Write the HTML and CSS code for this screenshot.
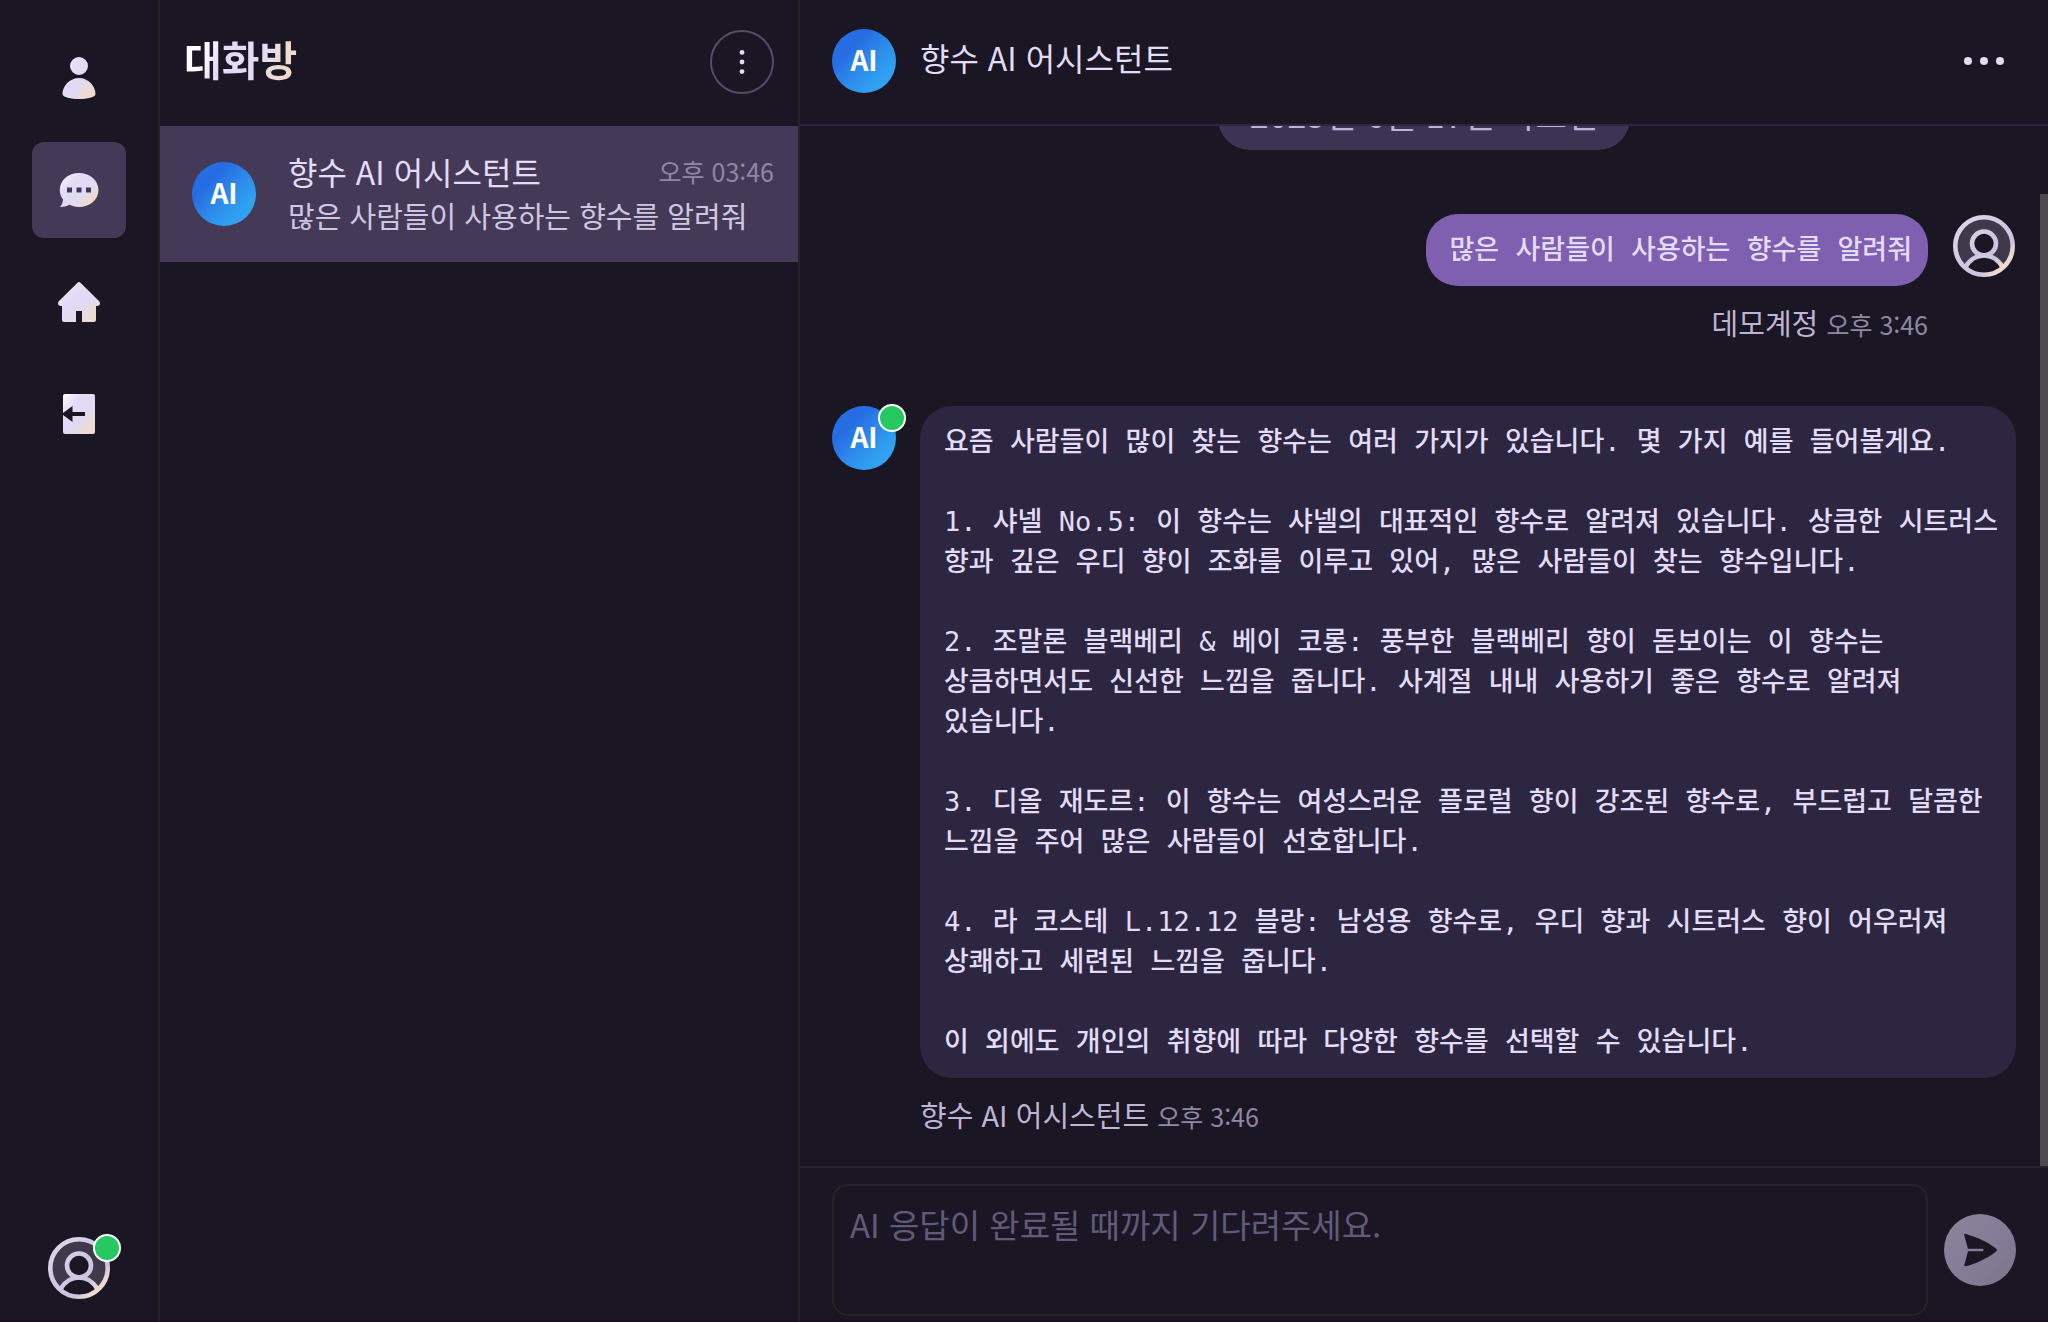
FILE: index.html
```html
<!DOCTYPE html>
<html lang="ko">
<head>
<meta charset="utf-8">
<meta name="viewport" content="width=device-width, initial-scale=1">
<title>대화방</title>
<link rel="stylesheet" href="styles.css">
</head>
<body>
<svg class="defs" aria-hidden="true">
  <defs>
    <linearGradient id="sheen" x1="0" y1="0" x2="1" y2="1">
      <stop offset="0" stop-color="#ffffff"/>
      <stop offset=".3" stop-color="#e2dcf6"/>
      <stop offset=".6" stop-color="#e0daf3"/>
      <stop offset=".8" stop-color="#eddbd2"/>
      <stop offset="1" stop-color="#efdbce"/>
    </linearGradient>
    <linearGradient id="ring" gradientUnits="userSpaceOnUse" x1="8" y1="8" x2="56" y2="56">
      <stop offset="0" stop-color="#dcd6e8"/>
      <stop offset=".4" stop-color="#cfcbe3"/>
      <stop offset=".75" stop-color="#cbc3dc"/>
      <stop offset=".9" stop-color="#eddbd2"/>
    </linearGradient>
    <symbol id="user-circle" viewBox="0 0 64 64">
      <circle cx="32" cy="32" r="28.5" fill="#3f394c"/>
      <path d="M14 51.500C19 44 25 41 32 41s13 3 18 10.500C44 58 38 60 32 60s-12-2-18-8.500z" fill="#1a1623"/>
      <g fill="none" stroke="url(#ring)" stroke-width="4.600">
        <circle cx="32" cy="32" r="28.700"/>
        <circle cx="32" cy="29.500" r="12" fill="#1a1623"/>
        <path d="M13.500 53C18 45.500 24.500 41.500 32 41.500S46 45.500 50.500 53"/>
      </g>
    </symbol>
  </defs>
</svg>
<div class="app">
  <nav class="rail" aria-label="메뉴">
    <div class="rail-items">
      <button class="rail-button" type="button" aria-label="친구">
        <svg class="icon" viewBox="0 0 48 48" fill="url(#sheen)"><path d="M24 3a9 9 0 1 1 0 18 9 9 0 0 1 0-18zM24 24c9.500 0 16.500 8 16.500 16 0 3.500-8.500 5-16.500 5s-16.500-1.500-16.500-5c0-8 7-16 16.500-16z"/></svg>
      </button>
      <button class="rail-button active" type="button" aria-label="대화방">
        <svg class="icon" viewBox="0 0 48 48" fill="url(#sheen)" fill-rule="evenodd"><path d="M24 7c10.500 0 19.500 7 19.500 17S34.500 41 24 41c-4 0-7-1-9.500-2.200C11.500 40.500 8.500 41 5 41c1.800-2.500 3-4.500 3-7.500C6 31 4.800 28 4.800 24 4.800 14 13.500 7 24 7zM12 21.500v5h5v-5zM21.500 21.500v5h5v-5zM31 21.500v5h5v-5z"/></svg>
      </button>
      <button class="rail-button" type="button" aria-label="홈">
        <svg class="icon" viewBox="0 0 48 48" fill="url(#sheen)"><path d="M22.500 4.700q1.500-1.500 3 0L44.500 23.500q1.500 3-1.500 4.500H41v14q0 2-2 2H27V33h-6v11H9q-2 0-2-2V28H5q-3-1.500-1.500-4.500z"/></svg>
      </button>
      <button class="rail-button" type="button" aria-label="나가기">
        <svg class="icon" viewBox="0 0 48 48" fill="url(#sheen)"><path d="M10 4h28q2 0 2 2v36q0 2-2 2H10q-2 0-2-2V25l9.500 7v-6H30v-4H17.500v-6L8 23V6q0-2 2-2z"/></svg>
      </button>
    </div>
    <button class="avatar rail-profile" type="button" aria-label="내 프로필">
      <svg class="user" viewBox="0 0 64 64"><use href="#user-circle"/></svg>
      <span class="online"></span>
    </button>
  </nav>

  <section class="rooms">
    <header class="rooms-header">
      <h1>대화방</h1>
      <button class="more" type="button" aria-label="더보기">
        <svg class="more-dots" viewBox="0 0 24 24" fill="#e2dcf6"><circle cx="12" cy="2.400" r="2.400"/><circle cx="12" cy="12" r="2.400"/><circle cx="12" cy="21.600" r="2.400"/></svg>
      </button>
    </header>
    <a class="room" href="#chat">
      <span class="avatar ai">AI</span>
      <span class="room-text">
        <span class="room-top"><span class="room-name">향수 AI 어시스턴트</span><time class="time">오후 03:46</time></span>
        <span class="preview">많은 사람들이 사용하는 향수를 알려줘</span>
      </span>
    </a>
  </section>

  <main class="chat" id="chat">
    <header class="chat-header">
      <span class="avatar ai">AI</span>
      <h2>향수 AI 어시스턴트</h2>
      <button class="menu" type="button" aria-label="메뉴 열기">
        <svg class="menu-dots" viewBox="0 0 40 8" fill="url(#sheen)"><circle cx="4" cy="4" r="4"/><circle cx="20" cy="4" r="4"/><circle cx="36" cy="4" r="4"/></svg>
      </button>
    </header>
    <div class="history">
      <div class="scroller">
        <div class="messages">
          <p class="date">2025년 6월 17일 화요일</p>
          <article class="message mine">
            <svg class="user" viewBox="0 0 64 64" role="img" aria-label="데모계정"><use href="#user-circle"/></svg>
            <div class="body">
              <pre class="bubble">많은 사람들이 사용하는 향수를 알려줘</pre>
              <p class="meta">데모계정 <time class="time">오후 3:46</time></p>
            </div>
          </article>
          <article class="message">
            <span class="avatar ai">AI<span class="online"></span></span>
            <div class="body">
              <pre class="bubble">요즘 사람들이 많이 찾는 향수는 여러 가지가 있습니다. 몇 가지 예를 들어볼게요.

1. 샤넬 No.5: 이 향수는 샤넬의 대표적인 향수로 알려져 있습니다. 상큼한 시트러스 향과 깊은 우디 향이 조화를 이루고 있어, 많은 사람들이 찾는 향수입니다.

2. 조말론 블랙베리 &amp; 베이 코롱: 풍부한 블랙베리 향이 돋보이는 이 향수는 상큼하면서도 신선한 느낌을 줍니다. 사계절 내내 사용하기 좋은 향수로 알려져 있습니다.

3. 디올 재도르: 이 향수는 여성스러운 플로럴 향이 강조된 향수로, 부드럽고 달콤한 느낌을 주어 많은 사람들이 선호합니다.

4. 라 코스테 L.12.12 블랑: 남성용 향수로, 우디 향과 시트러스 향이 어우러져 상쾌하고 세련된 느낌을 줍니다.

이 외에도 개인의 취향에 따라 다양한 향수를 선택할 수 있습니다.</pre>
              <p class="meta">향수 AI 어시스턴트 <time class="time">오후 3:46</time></p>
            </div>
          </article>
        </div>
      </div>
      <div class="scrollbar" aria-hidden="true"><div class="thumb"></div></div>
    </div>
    <form class="composer">
      <textarea class="input" aria-label="메시지" placeholder="AI 응답이 완료될 때까지 기다려주세요."></textarea>
      <button class="send" type="button" aria-label="보내기">
        <svg class="send-icon" viewBox="0 0 72 72" fill="#1a1623"><path d="M20 20.500q.5-1 2-.500C34 23.500 45 28.500 52.500 35q1 1 0 2C45 43.500 34 49 22 52.200q-1.500.3-1.800-.700L24 37.300h15q1.300-1.300 0-2.600H24z"/></svg>
      </button>
    </form>
  </main>
</div>
</body>
</html>
```
FILE: styles.css
```css
* {
  box-sizing: border-box;
}

body {
  margin: 0;
  background: #1a1623;
  color: #e2dcf6;
  font-family: "Noto Sans CJK KR", sans-serif;
}

h1,
h2,
p,
pre {
  margin: 0;
}

button {
  padding: 0;
  border: 0;
  background: none;
  color: inherit;
  font: inherit;
  cursor: pointer;
}

.defs {
  position: absolute;
  width: 0;
  height: 0;
}

.app {
  display: grid;
  grid-template-columns: 160px 640px minmax(0, 1fr);
  height: 100vh;
  border-bottom: 1px solid #140a1c;
}

/* Avatars */

.avatar {
  position: relative;
  flex: none;
  width: 64px;
  height: 64px;
}

.ai {
  display: grid;
  place-items: center;
  padding-bottom: 4px;
  border-radius: 50%;
  background: linear-gradient(135deg, #266de3 30%, #2d86ea 50%, #2f9ff0 75%, #38a5f2);
  color: #fff;
  font-size: 28px;
  font-weight: 700;
  line-height: 32px;
}

.user {
  display: block;
  flex: none;
  width: 64px;
  height: 64px;
}

.online {
  position: absolute;
  top: -2px;
  right: -10px;
  width: 28px;
  height: 28px;
  border: 2px solid #fff;
  border-radius: 50%;
  background: #26c95f;
}

/* Navigation rail */

.rail {
  display: flex;
  flex-direction: column;
  align-items: center;
  justify-content: space-between;
  padding: 30px 32px 21px;
  border-right: 2px solid #262428;
}

.rail-items {
  display: grid;
  gap: 16px;
  width: 100%;
}

.rail-button {
  display: grid;
  place-items: center;
  height: 96px;
  border-radius: 12px;
}

.rail-button.active {
  background: #453958;
}

.icon {
  width: 48px;
  height: 48px;
}

/* Room list */

.rooms {
  border-right: 2px solid #262428;
}

.rooms-header {
  display: flex;
  align-items: center;
  justify-content: space-between;
  height: 126px;
  padding: 0 24px 2px;
}

h1 {
  padding-bottom: 8px;
  background: linear-gradient(110deg, #fff 20%, #e2dcf6 35%, #e2dcf6 65%, #efdbce 80%);
  background-clip: text;
  -webkit-background-clip: text;
  color: transparent;
  font-size: 41px;
  font-weight: 700;
  line-height: 56px;
}

.more {
  display: grid;
  place-items: center;
  width: 64px;
  height: 64px;
  border: 2px solid #554d68;
  border-radius: 50%;
}

.more-dots {
  width: 24px;
  height: 24px;
}

.room {
  display: flex;
  align-items: center;
  gap: 32px;
  height: 136px;
  padding: 0 24px 0 32px;
  background: #453958;
  color: inherit;
  text-decoration: none;
}

.room-text {
  flex: 1;
  min-width: 0;
  padding-bottom: 6px;
}

.room-top {
  display: flex;
  align-items: center;
  justify-content: space-between;
  line-height: 48px;
}

.room-name {
  font-size: 32px;
}

.time {
  color: #8f88a4;
  font-size: 25px;
}

.preview {
  display: block;
  color: #cdc8e0;
  font-size: 29px;
  line-height: 40px;
}

/* Chat */

.chat {
  display: flex;
  flex-direction: column;
  min-width: 0;
  min-height: 0;
}

.chat-header {
  display: flex;
  flex: none;
  align-items: center;
  gap: 24px;
  height: 126px;
  padding: 0 32px 2px;
  border-bottom: 2px solid #2d2640;
}

h2 {
  flex: 1;
  padding-bottom: 8px;
  font-size: 32px;
  font-weight: 400;
  line-height: 48px;
}

.menu {
  display: grid;
  place-items: center;
  width: 64px;
  height: 64px;
}

.menu-dots {
  width: 40px;
  height: 8px;
}

.history {
  display: flex;
  flex: 1;
  min-height: 0;
}

/* Reversed column keeps the newest message in view */
.scroller {
  display: flex;
  flex: 1;
  flex-direction: column-reverse;
  min-width: 0;
  overflow-y: scroll;
  scrollbar-width: none;
}

.scrollbar {
  display: flex;
  flex: none;
  flex-direction: column;
  justify-content: flex-end;
  width: 8px;
}

.thumb {
  height: 93.5%;
  background: #4c4953;
}

.messages {
  display: flex;
  flex-direction: column;
  gap: 64px;
  padding: 32px 24px 32px 32px;
}

.date {
  align-self: center;
  padding: 4px 32px 12px;
  border-radius: 32px;
  background: #3d3455;
  color: #bdb4d6;
  font-size: 34px;
  line-height: 48px;
}

.message {
  display: flex;
  align-items: flex-start;
  gap: 24px;
}

.message.mine {
  flex-direction: row-reverse;
}

.body {
  display: grid;
  gap: 16px;
  min-width: 0;
}

.message:not(.mine) .body {
  flex: 1;
}

.bubble {
  padding: 16px 16px 16px 24px;
  border-radius: 32px;
  background: #2d2640;
  font-family: "DejaVu Sans Mono", "Noto Sans CJK KR", monospace;
  font-size: 27px;
  font-weight: 500;
  line-height: 40px;
  white-space: pre-wrap;
  word-break: keep-all;
}

.mine .bubble {
  background: #7f5fb0;
}

.meta {
  color: #bdb4d6;
  font-size: 29px;
  line-height: 40px;
}

.meta .time {
  line-height: 1;
}

.mine .meta {
  text-align: right;
}

/* Composer */

.composer {
  display: flex;
  flex: none;
  align-items: center;
  gap: 16px;
  padding: 16px 32px 5px;
  border-top: 2px solid #262428;
}

.input {
  flex: 1;
  min-width: 0;
  height: 132px;
  padding: 14px 16px;
  border: 2px solid #262428;
  border-radius: 16px;
  outline: 0;
  background: transparent;
  color: inherit;
  font-family: inherit;
  font-size: 33px;
  line-height: 48px;
  resize: none;
}

.input::placeholder {
  color: #625a7a;
  opacity: 1;
}

.send {
  flex: none;
  width: 72px;
  height: 72px;
  border-radius: 50%;
  background: linear-gradient(135deg, #8a8499, #857d98 50%, #7d7489);
}

.send-icon {
  display: block;
  width: 72px;
  height: 72px;
}
```
